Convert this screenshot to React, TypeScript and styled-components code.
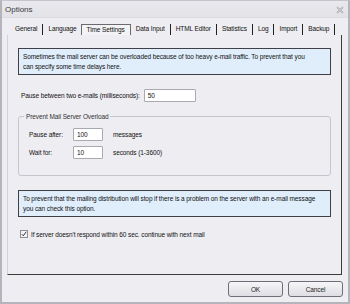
import React from "react";
import styled, { createGlobalStyle } from "styled-components";

// Options dialog - "Time Settings" tab of a mailing tool
const GlobalStyle = createGlobalStyle`
  html, body {
    margin: 0;
    padding: 0;
    background: #eeedf2;
  }
  body {
    font-family: "Liberation Sans", Arial, sans-serif;
    font-size: 6.5px;
    letter-spacing: -0.1px;
    color: #111;
  }
`;

const tabs = [
  "General",
  "Language",
  "Time Settings",
  "Data Input",
  "HTML Editor",
  "Statistics",
  "Log",
  "Import",
  "Backup",
];

const App = () => {
  return (
    <>
      <GlobalStyle />
      <Window>
        <TitleBar>
          <Title>Options</Title>
          <CloseIcon width="8" height="8" viewBox="0 0 8 8">
            <path d="M1 1 L7 7 M7 1 L1 7" stroke="#9a9aa2" strokeWidth="1.6" fill="none" />
            <path d="M1 1 L7 7 M7 1 L1 7" stroke="#f4f4f6" strokeWidth="0.5" fill="none" />
          </CloseIcon>
        </TitleBar>

        <TabStrip>
          {tabs.map((t) => (
            <Tab key={t} $active={t === "Time Settings"}>
              {t}
            </Tab>
          ))}
        </TabStrip>

        <Panel>
          <InfoBox $top={0}>
            Sometimes the mail server can be overloaded because of too heavy e-mail traffic. To prevent that you
            <br />
            can specify some time delays here.
          </InfoBox>

          <FieldRow>
            <Label>Pause between two e-mails (milliseconds):</Label>
            <Input $width={52}>50</Input>
          </FieldRow>

          <GroupBox>
            <Legend>Prevent Mail Server Overload</Legend>
            <GroupRow>
              <ShortLabel>Pause after:</ShortLabel>
              <Input $width={30}>100</Input>
              <Unit>messages</Unit>
            </GroupRow>
            <GroupRow>
              <ShortLabel>Wait for:</ShortLabel>
              <Input $width={30}>10</Input>
              <Unit>seconds (1-3600)</Unit>
            </GroupRow>
          </GroupBox>

          <InfoBox $top={14}>
            To prevent that the mailing distribution will stop if there is a problem on the server with an e-mail message
            <br />
            you can check this option.
          </InfoBox>

          <CheckRow>
            <CheckBox>
              <svg width="6" height="6" viewBox="0 0 6 6">
                <path d="M0.8 3.2 L2.3 4.8 L5.2 0.8" stroke="#333" strokeWidth="1" fill="none" />
              </svg>
            </CheckBox>
            If server doesn't respond within 60 sec. continue with next mail
          </CheckRow>
        </Panel>

        <ButtonBar>
          <Button>OK</Button>
          <Button>Cancel</Button>
        </ButtonBar>
      </Window>
    </>
  );
};

const Window = styled.div`
  width: 350px;
  height: 304px;
  box-sizing: border-box;
  border: 2px solid #b4b4bc;
  border-top: 1px solid #c4c4cc;
  background: #eeedf2;
  display: flex;
  flex-direction: column;
`;

const TitleBar = styled.div`
  height: 16px;
  display: flex;
  align-items: center;
  justify-content: space-between;
  padding: 0 4px 0 3px;
  background: linear-gradient(#e9e9ed, #e2e2e7);
  border-bottom: 1px solid #dcdce2;
`;

const Title = styled.span`
  font-size: 8px;
  letter-spacing: 0;
  color: #3a3a3a;
`;

const CloseIcon = styled.svg`
  display: block;
  margin-top: 1px;
`;

const TabStrip = styled.div`
  display: flex;
  align-items: stretch;
  height: 11px;
  margin: 6px 0 0 8px;
`;

const Tab = styled.div<{ $active?: boolean }>`
  display: flex;
  align-items: center;
  padding: 0 5px;
  line-height: 1;
  white-space: nowrap;
  border-right: 1.5px solid #222;
  ${(p) =>
    p.$active &&
    `
    border: 1px solid #6a6a70;
    border-bottom: none;
    margin-left: -2px;
    background: #f3f3f6;
  `}
`;

const Panel = styled.div`
  margin: 0 6px 0 5px;
  height: 240px;
  box-sizing: border-box;
  padding: 13px 10px 0 10px;
  border-left: 1px solid #d2d2da;
  border-right: 1px solid #3c3c3c;
  border-bottom: 1px solid #3c3c3c;
  display: flex;
  flex-direction: column;
`;

const InfoBox = styled.div<{ $top: number }>`
  box-sizing: border-box;
  margin-top: ${(p) => p.$top}px;
  background: #e0eefb;
  border: 1px solid #3f3f45;
  padding: 3px 3px 3px 4px;
  line-height: 10px;
  height: 27px;
  white-space: nowrap;
  overflow: hidden;
`;

const FieldRow = styled.div`
  display: flex;
  align-items: center;
  margin: 14px 0 0 3px;
  gap: 4px;
`;

const Label = styled.span`
  white-space: nowrap;
`;

const Input = styled.div<{ $width: number }>`
  width: ${(p) => p.$width}px;
  height: 13px;
  box-sizing: border-box;
  background: #fff;
  border: 1px solid #a9a9b2;
  border-radius: 1px;
  padding: 1px 3px;
  line-height: 10px;
`;

const GroupBox = styled.div`
  position: relative;
  margin-top: 14px;
  height: 60px;
  box-sizing: border-box;
  border: 1px solid #c6c6cc;
  border-radius: 3px;
  padding: 11px 0 0 10px;
  display: flex;
  flex-direction: column;
  gap: 5px;
`;

const Legend = styled.span`
  position: absolute;
  top: -5px;
  left: 5px;
  padding: 0 2px;
  background: #eeedf2;
  color: #333;
  line-height: 9px;
`;

const GroupRow = styled.div`
  display: flex;
  align-items: center;
`;

const ShortLabel = styled.span`
  width: 44px;
`;

const Unit = styled.span`
  margin-left: 10px;
`;

const CheckRow = styled.div`
  display: flex;
  align-items: center;
  gap: 3px;
  margin: 13px 0 0 2px;
`;

const CheckBox = styled.div`
  width: 8px;
  height: 8px;
  box-sizing: border-box;
  border: 1px solid #8e8e96;
  background: #f4f4f6;
  display: flex;
  align-items: center;
  justify-content: center;
`;

const ButtonBar = styled.div`
  display: flex;
  justify-content: flex-end;
  gap: 5px;
  margin: 6px 5px 0 0;
`;

const Button = styled.div`
  width: 55px;
  height: 16px;
  box-sizing: border-box;
  border: 1px solid #6e6e76;
  border-radius: 3px;
  background: linear-gradient(#f6f6f8, #dedee3);
  display: flex;
  align-items: center;
  justify-content: center;
  color: #222;
`;

export default App;
